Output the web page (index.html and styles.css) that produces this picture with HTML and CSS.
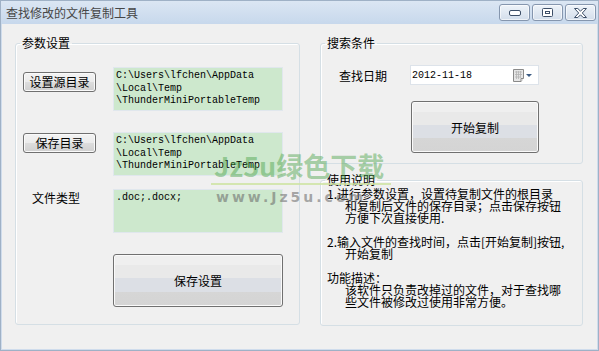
FILE: index.html
```html
<!DOCTYPE html>
<html lang="zh-CN">
<head>
  <meta charset="UTF-8" />
  <title>查找修改的文件复制工具</title>
  <link rel="stylesheet" href="styles.css">
</head>
<body>
  <div class="window">
    <div class="titlebar">
      <span class="title">查找修改的文件复制工具</span>
      <div class="caption-buttons">
        <span class="cbtn">
          <svg width="12" height="6" viewBox="0 0 12 6"><rect x="0.5" y="0.5" width="11" height="5" rx="1.5" fill="#fff" stroke="#3d4f68"/></svg>
        </span>
        <span class="cbtn">
          <svg width="11" height="9" viewBox="0 0 11 9"><rect x="0.5" y="0.5" width="10" height="8" rx="1" fill="#fff" stroke="#3d4f68"/><rect x="3.5" y="3.5" width="4" height="2" fill="none" stroke="#3d4f68"/></svg>
        </span>
        <span class="cbtn">
          <svg width="13" height="10" viewBox="0 0 13 10"><polygon points="0.5,0.5 3.8,0.5 6.5,3.2 9.2,0.5 12.5,0.5 8.3,5 12.5,9.5 9.2,9.5 6.5,6.8 3.8,9.5 0.5,9.5 4.7,5" fill="#fff" stroke="#3d4f68" stroke-linejoin="round"/></svg>
        </span>
      </div>
    </div>

    <div class="client">
      <fieldset class="group params">
        <legend>参数设置</legend>
        <div class="row">
          <button class="btn small">设置源目录</button>
          <div class="textbox">C:\Users\lfchen\AppData
\Local\Temp
\ThunderMiniPortableTemp</div>
        </div>
        <div class="row gap-wide">
          <button class="btn small nudge">保存目录</button>
          <div class="textbox">C:\Users\lfchen\AppData
\Local\Temp
\ThunderMiniPortableTemp</div>
        </div>
        <div class="row gap-narrow">
          <span class="field-label">文件类型</span>
          <div class="textbox">.doc;.docx;</div>
        </div>
        <div class="row gap-wide">
          <span class="spacer"></span>
          <button class="btn big">保存设置</button>
        </div>
      </fieldset>

      <div class="right-col">
        <fieldset class="group search">
          <legend>搜索条件</legend>
          <div class="date-row">
            <span class="date-label">查找日期</span>
            <div class="datebox">
              <span class="date-value">2012-11-18</span>
              <svg class="cal" width="20" height="13" viewBox="0 0 20 13">
                <path d="M0.5 0.5 H10.5 V9 L8 12.5 H0.5 Z" fill="#e6e6e6" stroke="#8a8a8a"/>
                <path d="M2 3h7M2 5.5h7M2 8h5M3.5 2v8M5.5 2v8M7.5 2v7" stroke="#b4b4b4" stroke-width="0.8"/>
                <path d="M8 12.5 V9.5 H10.5" fill="#fff" stroke="#8a8a8a"/>
                <polygon points="13,5 19,5 16,8" fill="#3b5a82"/>
              </svg>
            </div>
          </div>
          <button class="btn big start">开始复制</button>
        </fieldset>

        <fieldset class="group help">
          <legend>使用说明</legend>
          <div class="ln">1.进行参数设置，设置待复制文件的根目录</div>
          <div class="ln indent">和复制后文件的保存目录；点击保存按钮</div>
          <div class="ln indent">方便下次直接使用.</div>
          <div class="ln blank"></div>
          <div class="ln">2.输入文件的查找时间，点击[开始复制]按钮,</div>
          <div class="ln indent">开始复制</div>
          <div class="ln blank"></div>
          <div class="ln">功能描述：</div>
          <div class="ln indent">该软件只负责改掉过的文件，对于查找哪</div>
          <div class="ln indent">些文件被修改过使用非常方便。</div>
        </fieldset>
      </div>
    </div>

    <!-- site watermark over the screenshot -->
    <div class="watermark">
      <div class="wm-logo">Jz5u绿色下载</div>
      <div class="wm-line"></div>
      <div class="wm-url">www.Jz5u.com</div>
    </div>
  </div>
</body>
</html>
```

FILE: styles.css
```css
body {
  margin: 0;
  font-family: "Noto Sans CJK SC", sans-serif;
  font-size: 12px;
  color: #000;
}
.window {
  position: relative;
  width: 599px;
  height: 351px;
  box-sizing: border-box;
  border: 1px solid #9fb1c6;
  background: #cfdcec;
  display: flex;
  flex-direction: column;
  overflow: hidden;
}
.titlebar {
  height: 23px;
  flex: none;
  display: flex;
  align-items: center;
  justify-content: space-between;
  padding: 0 2px 0 5px;
  background: linear-gradient(#dbe6f3, #c7d8ec);
}
.title {
  color: #464646;
  font-size: 12px;
  line-height: 14px;
}
.caption-buttons {
  display: flex;
  gap: 2px;
}
.cbtn {
  width: 29px;
  height: 15px;
  border: 1px solid #8596ae;
  border-radius: 3px;
  background: linear-gradient(#eef3f9, #d3deeb);
  box-shadow: inset 0 0 0 1px rgba(255,255,255,0.6);
  display: flex;
  align-items: center;
  justify-content: center;
}
.client {
  flex: 1;
  margin: 0 1px 1px 1px;
  background: #f0f0f0;
  display: grid;
  grid-template-columns: 285px 263px;
  column-gap: 20px;
  align-items: start;
  padding: 12px 0 0 13px;
}
.group {
  margin: 0;
  min-width: 0;
  box-sizing: border-box;
  border: 1px solid #d5dfe5;
  border-radius: 3px;
  box-shadow: inset 1px 1px 0 #fff;
}
.group legend {
  font-size: 12px;
  line-height: 14px;
  padding: 0 2px;
  margin-left: -3px;
}
.params {
  height: 289px;
  padding: 17px 0 0 7px;
}
.row {
  display: flex;
  align-items: flex-start;
}
.gap-wide { margin-top: 21px; }
.gap-narrow { margin-top: 13px; }
.btn {
  font-family: "Noto Sans CJK SC", sans-serif;
  font-size: 12px;
  color: #000;
  border: 1px solid #707070;
  border-radius: 3px;
  padding: 0;
  box-shadow: inset 0 0 0 1px #fafafa;
}
.small {
  width: 73px;
  height: 20px;
  line-height: 16px;
  margin: 5px 17px 0 0;
  background: linear-gradient(#f3f3f3, #ebebeb 50%, #dddddd 50%, #d0d0d0);
}
.small.nudge { margin-top: 1px; }
.big {
  width: 170px;
  height: 53px;
  background: linear-gradient(#efefef 0, #efefef 20%, #e9e9e9 20%, #e9e9e9 46%, #dcdfe5 46%, #dcdfe5 72%, #d6d6d6 72%, #d4d4d4 100%);
}
.textbox {
  width: 170px;
  height: 44px;
  box-sizing: border-box;
  border: 1px solid #e0e7ed;
  background: #cde8cd;
  font-family: "Liberation Mono", monospace;
  font-size: 10px;
  line-height: 12.5px;
  padding: 2px 2px;
  white-space: pre;
  overflow: hidden;
}
.field-label {
  width: 81px;
  margin: 2px 0 0 9px;
  line-height: 14px;
}
.spacer { width: 90px; }

.right-col {
  display: flex;
  flex-direction: column;
}
.search {
  height: 128px;
  padding: 15px 0 0 6px;
}
.search legend,
.help legend {
  margin-left: -2px;
}
.date-row {
  display: flex;
  align-items: center;
}
.date-label {
  width: 71px;
  margin-left: 12px;
}
.datebox {
  width: 129px;
  height: 20px;
  box-sizing: border-box;
  border: 1px solid #dde3ea;
  background: #fff;
  display: flex;
  align-items: center;
  justify-content: space-between;
  padding: 0 5px 0 1px;
}
.date-value {
  font-family: "Liberation Mono", monospace;
  font-size: 10px;
}
.start {
  width: 128px;
  height: 52px;
  margin: 16px 0 0 84px;
}
.help {
  height: 153px;
  margin-top: 9px;
  padding: 1px 0 0 6px;
}
.ln {
  line-height: 12px;
  height: 12px;
  white-space: nowrap;
}
.indent { padding-left: 18px; }

.watermark {
  position: absolute;
  left: 210px;
  top: 149px;
  pointer-events: none;
}
.wm-logo {
  font-family: "Noto Sans CJK SC", sans-serif;
  font-weight: 700;
  font-size: 27px;
  line-height: 31px;
  padding-left: 3px;
  color: rgba(70, 160, 70, 0.45);
}
.wm-line {
  width: 180px;
  height: 2px;
  margin-top: 2px;
  background: rgba(205, 228, 160, 0.8);
}
.wm-url {
  font-family: "DejaVu Sans", sans-serif;
  font-weight: 700;
  font-size: 14px;
  letter-spacing: 3px;
  line-height: 18px;
  margin-top: 3px;
  padding-left: 5px;
  color: rgba(100, 100, 100, 0.55);
}
```
